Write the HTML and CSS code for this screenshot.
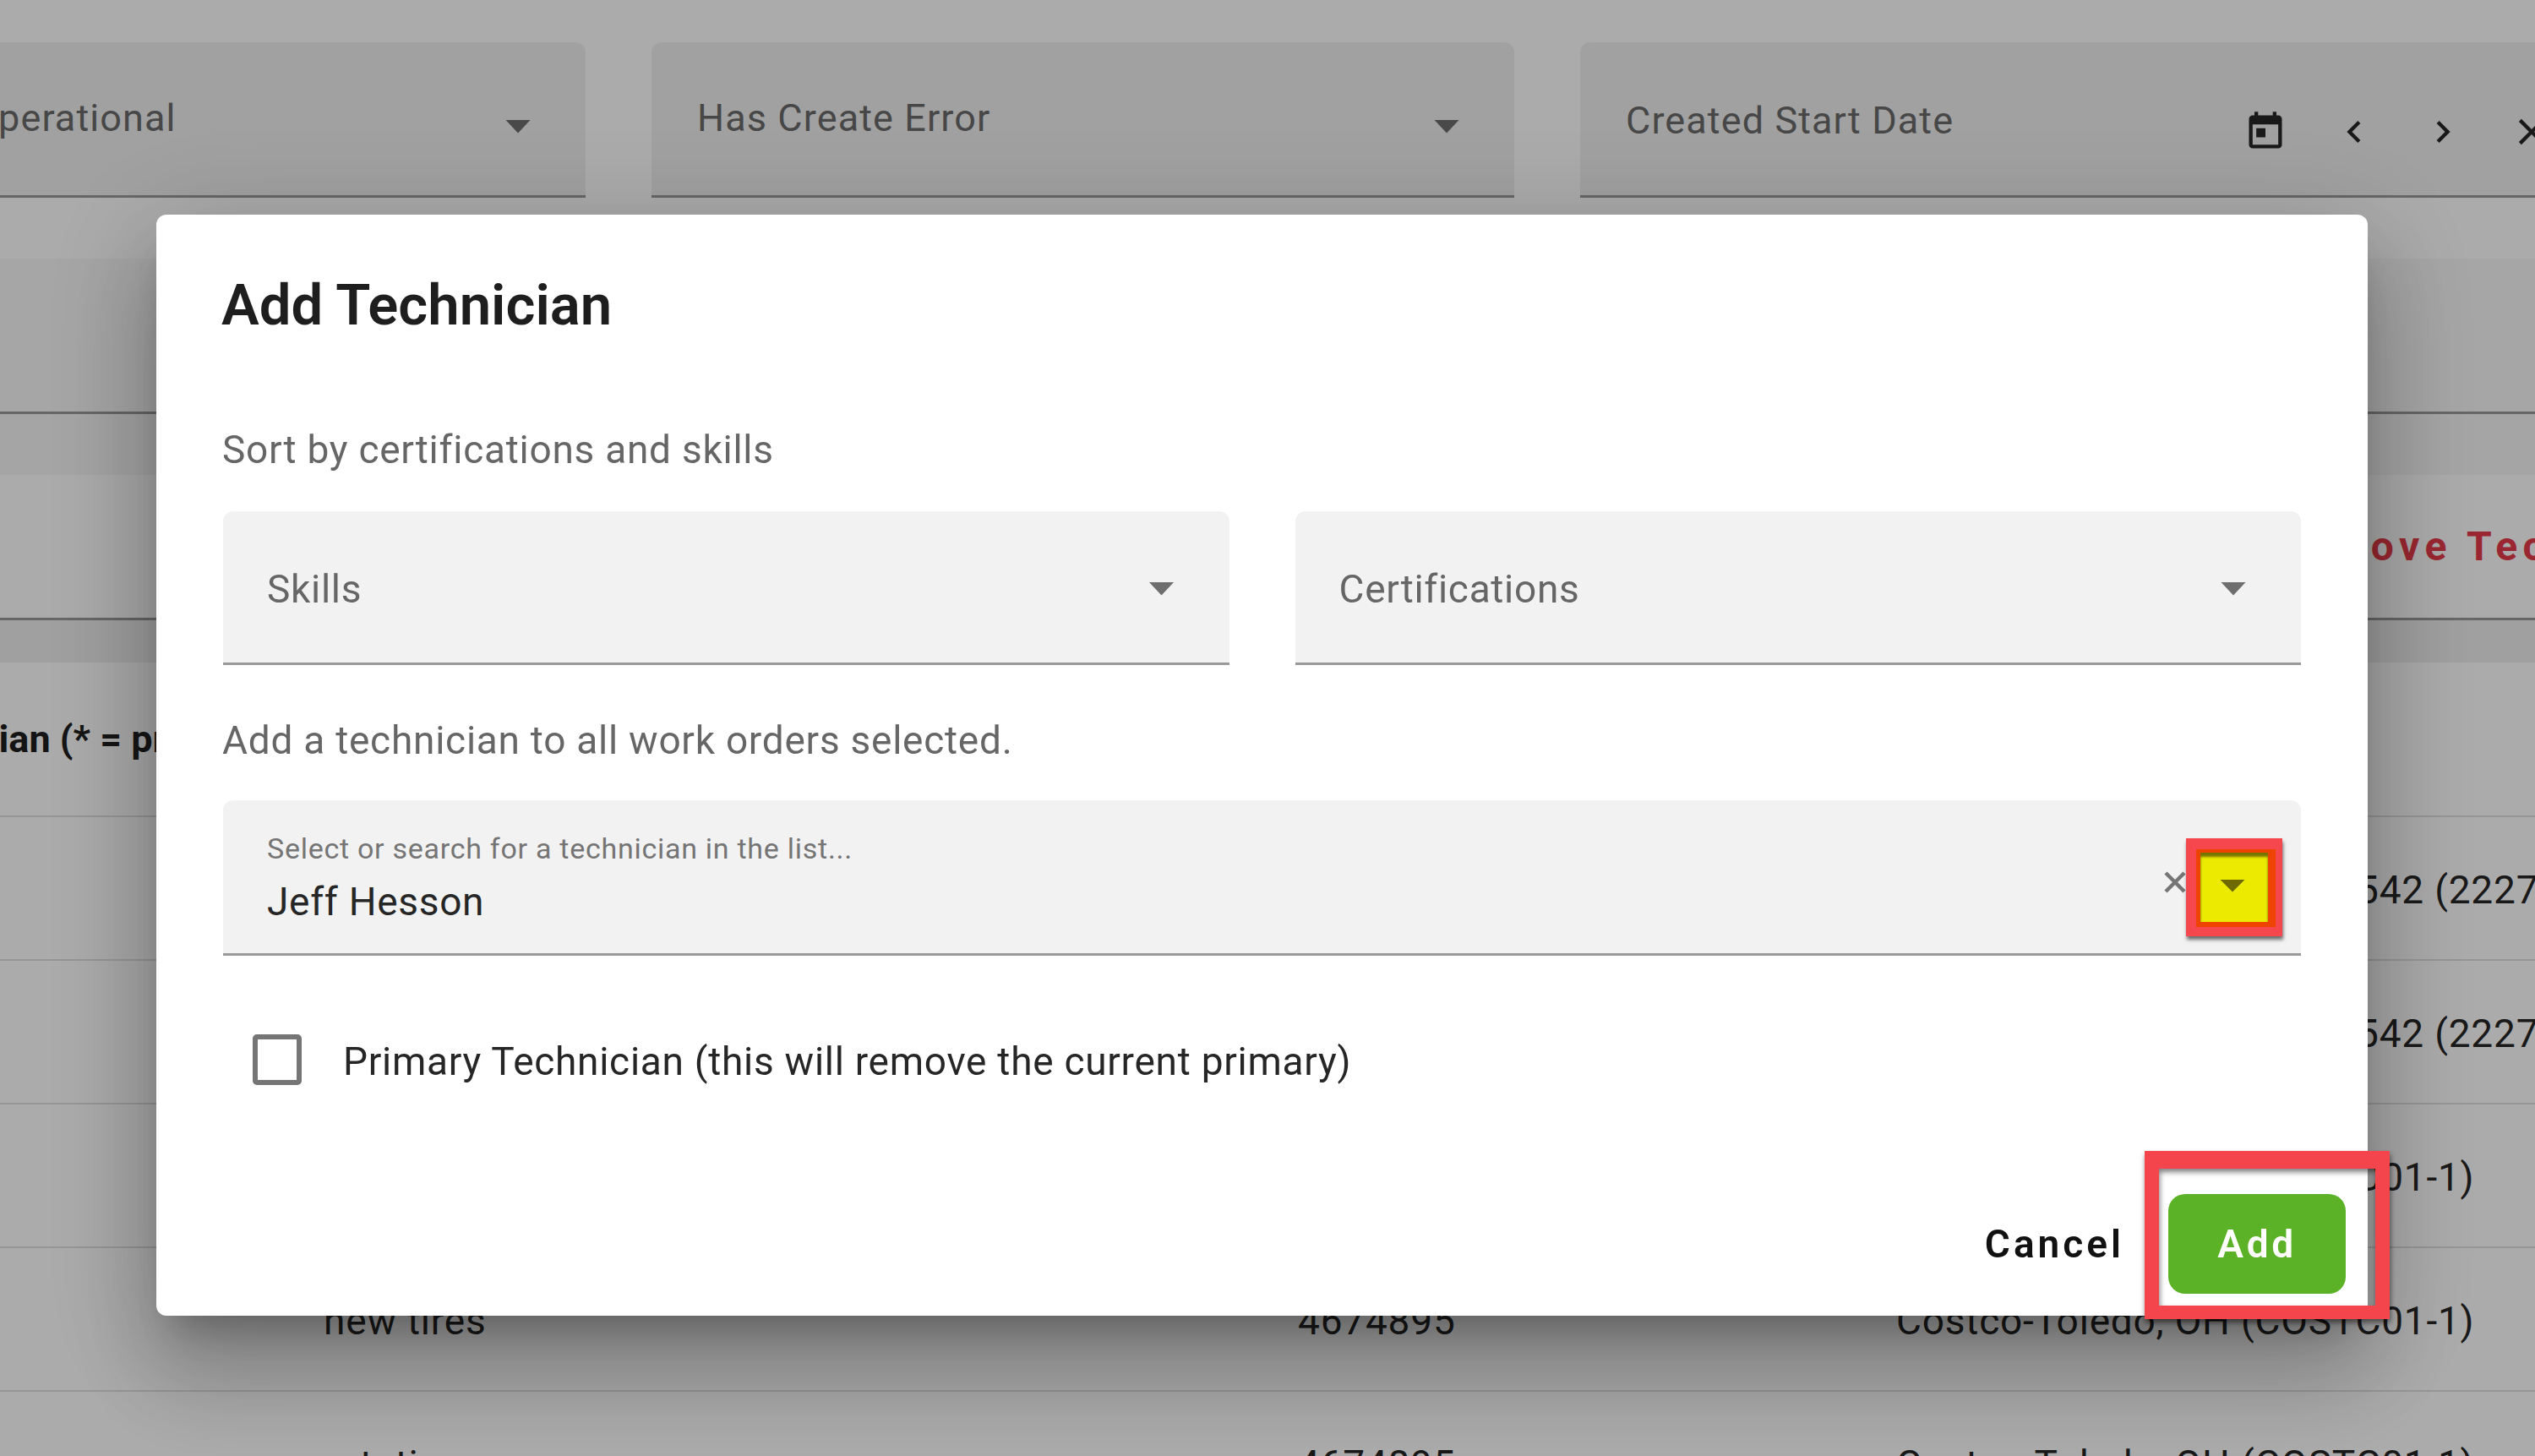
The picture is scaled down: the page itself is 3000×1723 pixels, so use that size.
FILE: index.html
```html
<!DOCTYPE html>
<html lang="en">
<head>
<meta charset="utf-8">
<title>Add Technician</title>
<link rel="stylesheet" href="styles.css">
</head>
<body>
<main class="page">
  <section class="filters">
    <div class="filter filter-first">
      <span class="filter-label">Operational</span>
      <span class="arrow"></span>
    </div>
    <div class="filter">
      <span class="filter-label">Has Create Error</span>
      <span class="arrow"></span>
    </div>
    <div class="filter filter-date">
      <span class="filter-label filter-label-date">Created Start Date</span>
      <div class="date-actions">
        <span class="icon-btn"><svg class="icon" viewBox="0 0 24 24"><path d="M19 3h-1V1h-2v2H8V1H6v2H5c-1.11 0-1.99.9-1.99 2L3 19c0 1.1.89 2 2 2h14c1.1 0 2-.9 2-2V5c0-1.1-.9-2-2-2zm0 16H5V8h14v11zM7 10h5v5H7z"/></svg></span>
        <span class="icon-btn"><svg class="icon" viewBox="0 0 24 24"><path d="M15.41 7.41 14 6l-6 6 6 6 1.41-1.41L10.83 12z"/></svg></span>
        <span class="icon-btn"><svg class="icon" viewBox="0 0 24 24"><path d="M10 6 8.59 7.41 13.17 12l-4.58 4.59L10 18l6-6z"/></svg></span>
        <span class="icon-btn"><svg class="icon" viewBox="0 0 24 24"><path d="M19 6.41 17.59 5 12 10.59 6.41 5 5 6.41 10.59 12 5 17.59 6.41 19 12 13.41 17.59 19 19 17.59 13.41 12z"/></svg></span>
      </div>
    </div>
  </section>
  <section class="summary"></section>
  <div class="band"></div>
  <section class="toolbar"><span class="remove-link">Remove Technician</span></section>
  <div class="band band-low"></div>
  <section class="table">
    <div class="table-head"><span class="head-cell">Technician (* = primary)</span></div>
    <div class="row"><span class="cell-site cell-site-clipped">542 (22274)</span></div>
    <div class="row"><span class="cell-site cell-site-clipped">542 (22274)</span></div>
    <div class="row"><span class="cell-desc"></span><span class="cell-num">4674895</span><span class="cell-site">Costco-Toledo, OH (COSTC01-1)</span></div>
    <div class="row"><span class="cell-desc">new tires</span><span class="cell-num">4674895</span><span class="cell-site">Costco-Toledo, OH (COSTC01-1)</span></div>
    <div class="row"><span class="cell-desc">rotation</span><span class="cell-num">4674895</span><span class="cell-site">Costco-Toledo, OH (COSTC01-1)</span></div>
  </section>
</main>

<div class="backdrop"></div>

<div class="dialog">
  <div class="dialog-body">
    <h2 class="dialog-title">Add Technician</h2>
    <p class="hint hint-sort">Sort by certifications and skills</p>
    <div class="field-row">
      <div class="field"><span class="field-label">Skills</span><span class="arrow"></span></div>
      <div class="field"><span class="field-label">Certifications</span><span class="arrow"></span></div>
    </div>
    <p class="hint hint-add">Add a technician to all work orders selected.</p>
    <div class="select">
      <div class="select-text">
        <span class="select-label">Select or search for a technician in the list...</span>
        <span class="select-value">Jeff Hesson</span>
      </div>
      <svg class="clear" viewBox="0 0 24 24"><path d="M1 1 23 23M23 1 1 23"/></svg>
      <div class="marker"><div class="marker-inner"><span class="arrow arrow-marked"></span></div></div>
    </div>
    <label class="check-row">
      <span class="checkbox"></span>
      <span class="check-label">Primary Technician (this will remove the current primary)</span>
    </label>
  </div>
  <div class="actions">
    <span class="btn-cancel">Cancel</span>
    <span class="btn-add">Add</span>
  </div>
  <div class="add-outline"></div>
</div>
</body>
</html>
```
FILE: styles.css
```css
* { box-sizing: border-box; }
html, body {
  margin: 0;
  height: 1723px;
  overflow: hidden;
  background: #fff;
  font-family: Roboto, "Noto Sans", sans-serif;
}
.page { width: 3000px; height: 1723px; overflow: hidden; }

.arrow {
  display: block;
  flex: none;
  width: 30px;
  height: 16px;
  background: #6e6e6e;
  clip-path: polygon(0 0, 100% 0, 50% 100%);
}

/* filter bar */
.filters {
  display: flex;
  gap: 78px;
  margin: 0 0 0 -328px;
  padding-top: 50px;
  width: 3400px;
}
.filter {
  position: relative;
  flex: none;
  width: 1021px;
  height: 184px;
  display: flex;
  align-items: center;
  justify-content: space-between;
  padding: 0 65px 0 54px;
  background: #f0f0f0;
  border-bottom: 3px solid #999;
  border-radius: 12px 12px 0 0;
  color: #6b6b6b;
  font-size: 45px;
  letter-spacing: 1.1px;
}
.filter-first { padding-left: 294px; }
.filter-label { margin-top: -2px; }
.filter .arrow { margin-top: 18px; }
.filter-date { width: 1400px; justify-content: flex-start; }
.filter-label-date { margin-top: 4px; }
.date-actions {
  display: flex;
  margin-left: 316px;
  padding-top: 30px;
}
.icon-btn {
  flex: none;
  width: 105px;
  display: flex;
  justify-content: center;
}
.icon { width: 52px; height: 52px; fill: #262626; display: block; }

/* page sections */
.summary { height: 184px; margin-top: 72px; background: #f8f8f8; border-bottom: 3px solid #999; }
.band { height: 72px; background: #f6f6f6; }
.band-low { height: 50px; background: #efefef; }
.toolbar {
  height: 172px;
  padding-left: 2688px;
  display: flex;
  align-items: center;
  border-bottom: 3px solid #999;
  white-space: nowrap;
}
.remove-link { color: #e53a48; font-size: 48px; font-weight: 700; letter-spacing: 6.5px; }

.table-head {
  height: 183px;
  display: flex;
  align-items: center;
  border-bottom: 2px solid #e0e0e0;
}
.head-cell { margin-left: -161px; font-size: 45px; font-weight: 700; color: #1f1f1f; white-space: nowrap; }
.row {
  height: 170px;
  padding-left: 383px;
  padding-top: 4px;
  display: flex;
  align-items: center;
  border-bottom: 2px solid #e0e0e0;
  font-size: 46px;
  letter-spacing: .8px;
  color: #262626;
  white-space: nowrap;
}
.cell-desc { flex: none; width: 1153px; }
.cell-num { flex: none; width: 708px; }
.cell-site { flex: none; }
.cell-site-clipped { margin-left: 2406px; }

/* overlay */
.backdrop {
  position: fixed;
  inset: 0;
  background: rgba(0, 0, 0, .33);
}
.dialog {
  position: fixed;
  left: 185px;
  top: 254px;
  width: 2617px;
  height: 1303px;
  padding: 0 26px 26px;
  display: flex;
  flex-direction: column;
  background: #fff;
  border-radius: 12px;
  box-shadow: 0 32px 43px -20px rgba(0, 0, 0, .25),
              0 69px 109px 9px rgba(0, 0, 0, .18),
              0 26px 132px 23px rgba(0, 0, 0, .14);
}
.dialog-body { padding: 67px 53px 0; flex: 1; }
.dialog-title {
  margin: 0 0 0 -2px;
  font-size: 67px;
  line-height: 80px;
  font-weight: 600;
  color: #1e1e1e;
}
.hint {
  margin: 0 0 0 -1px;
  font-size: 46px;
  line-height: 60px;
  letter-spacing: .74px;
  color: #666;
}
.hint-sort { margin-top: 101px; }
.hint-add { margin-top: 59px; }
.field-row {
  display: grid;
  grid-template-columns: 1fr 1fr;
  gap: 78px;
  margin-top: 43px;
}
.field {
  height: 182px;
  display: flex;
  align-items: center;
  justify-content: space-between;
  padding: 0 65px 0 52px;
  background: #f2f2f2;
  border-bottom: 3px solid #999;
  border-radius: 12px 12px 0 0;
  font-size: 46px;
  letter-spacing: .7px;
  color: #666;
}
.field-label, .field .arrow { margin-top: 4px; }
.select {
  position: relative;
  height: 184px;
  margin-top: 41px;
  display: flex;
  align-items: center;
  justify-content: space-between;
  padding: 0 137px 0 52px;
  background: #f2f2f2;
  border-bottom: 3px solid #999;
  border-radius: 12px 12px 0 0;
}
.select-text { display: flex; flex-direction: column; }
.select-label { font-size: 34px; line-height: 44px; letter-spacing: .73px; color: #757575; position: relative; top: 2px; }
.select-value { margin-top: 15px; font-size: 46px; line-height: 56px; letter-spacing: .7px; color: #262626; }
.clear { width: 24px; height: 24px; margin-top: 13px; fill: none; stroke: #757575; stroke-width: 4.5; overflow: visible; }
.marker {
  position: absolute;
  right: 22px;
  top: 45px;
  width: 114px;
  height: 116px;
  padding: 13px 8px 11px 12px;
  background: #f6464e;
  box-shadow: 1px 4px 4px rgba(0, 0, 0, .55);
}
.marker-inner {
  height: 100%;
  display: flex;
  align-items: center;
  justify-content: center;
  padding-right: 4px;
  background: #ebea00;
  border-style: solid;
  border-color: #ee4400;
  border-width: 4px 9px 6px 5px;
  box-shadow: inset 0 5px 3px rgba(0, 0, 0, .5);
}
.arrow-marked { background: #6e6a00; margin-top: -4px; height: 15px; }
.check-row {
  display: flex;
  align-items: center;
  height: 60px;
  margin-top: 93px;
  padding-left: 35px;
}
.checkbox {
  flex: none;
  width: 58px;
  height: 60px;
  border: 6px solid #757575;
  border-radius: 5px;
}
.check-label { margin-left: 49px; margin-top: 4px; font-size: 46px; letter-spacing: .72px; color: #262626; }
.actions {
  display: flex;
  align-items: center;
  justify-content: flex-end;
  gap: 52px;
}
.btn-cancel {
  font-size: 46px;
  font-weight: 600;
  letter-spacing: 4px;
  color: #111;
}
.btn-add {
  width: 210px;
  height: 118px;
  display: flex;
  align-items: center;
  justify-content: center;
  background: #5cb226;
  border-radius: 20px;
  color: #fff;
  font-size: 46px;
  font-weight: 600;
  letter-spacing: 3.6px;
}
.add-outline {
  position: absolute;
  left: 2353px;
  top: 1108px;
  width: 290px;
  height: 199px;
  border-style: solid;
  border-color: #f4454d;
  border-width: 21px 17px 16px;
  filter: drop-shadow(1px 4px 3px rgba(0, 0, 0, .5));
}
```
